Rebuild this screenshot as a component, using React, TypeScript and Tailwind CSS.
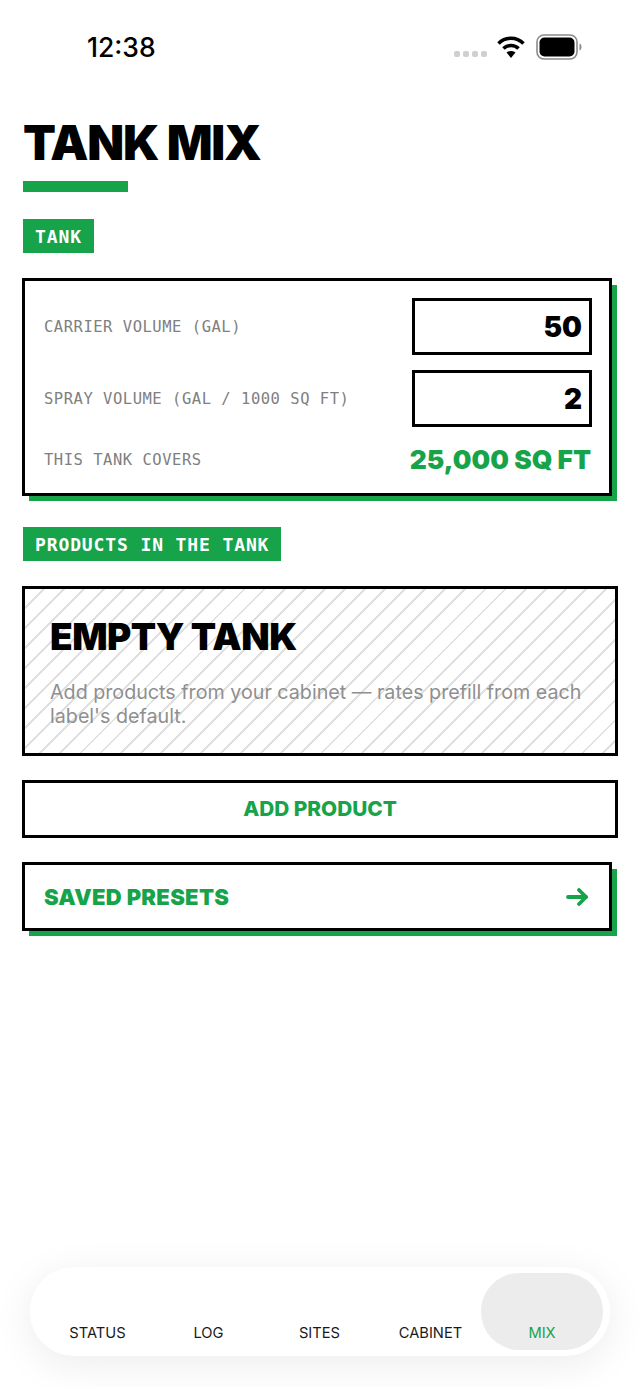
import React from "react";

const mono = "font-['DejaVu_Sans_Mono',monospace]";

function Badge({ children, className }: { children: React.ReactNode; className: string }) {
  return (
    <div className={`${className} flex h-[34px] w-fit items-center bg-[#16a34a] px-3 ${mono} text-[18px] tracking-[0.88px] font-bold text-white`}>
      {children}
    </div>
  );
}

function FieldRow({ label, value, className }: { label: string; value: string; className: string }) {
  return (
    <div className={`${className} flex items-center justify-between`}>
      <span className={`${mono} pt-[3px] text-[15.5px] tracking-[0.52px] text-[#808080]`}>{label}</span>
      <div className="flex h-[57px] w-[180px] items-center justify-end border-[3px] border-black px-[7px] text-[28px] font-black text-black">
        {value}
      </div>
    </div>
  );
}

function NavItem({ label }: { label: string }) {
  return (
    <div className="flex w-[111px] items-end justify-center pb-[6px] text-[14.7px] text-[#1a1a1a]">{label}</div>
  );
}

export default function App() {
  return (
    <div className="flex h-[1387px] w-[640px] flex-col overflow-hidden bg-white font-['Inter',sans-serif]">
      {/* status bar */}
      <div className="flex h-[94px] items-center pl-[87px] pr-[58px]">
        <span className="pt-[2px] text-[26.5px] font-medium text-black">12:38</span>
        <div className="ml-auto flex items-center">
          <div className="mt-[13px] flex gap-[3px]">
            <div className="h-[6px] w-[6px] rounded-[2px] bg-[#cfcfcf]" />
            <div className="h-[6px] w-[6px] rounded-[2px] bg-[#cfcfcf]" />
            <div className="h-[6px] w-[6px] rounded-[2px] bg-[#cfcfcf]" />
            <div className="h-[6px] w-[6px] rounded-[2px] bg-[#cfcfcf]" />
          </div>
          <svg className="ml-[10px]" width="28" height="24" viewBox="0 0 28 24" fill="none">
            <path d="M1.5 8.5C8.5 1.5 19.5 1.5 26.5 8.5" stroke="black" strokeWidth="3.6" />
            <path d="M6.5 13.5C10.5 9.5 17.5 9.5 21.5 13.5" stroke="black" strokeWidth="3.6" />
            <path d="M14 23L9.5 17.5C12 15.5 16 15.5 18.5 17.5L14 23Z" fill="black" />
          </svg>
          <svg className="ml-[11px]" width="46" height="26" viewBox="0 0 46 26" fill="none">
            <rect x="1" y="1" width="40" height="24" rx="7" stroke="#8a8a8a" strokeWidth="1.6" />
            <rect x="3.5" y="3.5" width="35" height="19" rx="5" fill="black" />
            <path d="M43.5 9.5C45 10 45.5 11.5 45.5 13C45.5 14.5 45 16 43.5 16.5Z" fill="#8a8a8a" />
          </svg>
        </div>
      </div>

      <div className="flex flex-col px-[22px]">
        <h1 className="mt-[20px] h-[58px] pl-[1px] text-[48px] leading-[58px] font-black tracking-[-1.2px] text-black">
          TANK MIX
        </h1>
        <div className="ml-[1px] mt-[9px] h-[11px] w-[105px] bg-[#16a34a]" />
        <Badge className="ml-[1px] mt-[27px]">TANK</Badge>

        <div className="mt-[25px] w-[590px] border-[3px] border-black bg-white px-[19px] pr-[17px] shadow-[6px_6px_0_-1px_#16a34a]">
          <FieldRow className="mt-[17px]" label="CARRIER VOLUME (GAL)" value="50" />
          <FieldRow className="mt-[15px]" label="SPRAY VOLUME (GAL / 1000 SQ FT)" value="2" />
          <div className="mb-[16px] mt-[16px] flex items-center justify-between">
            <span className={`${mono} pt-[1px] text-[15.5px] tracking-[0.52px] text-[#808080]`}>THIS TANK COVERS</span>
            <span className="pr-[1px] text-[26.3px] leading-[34px] font-black text-[#16a34a]">25,000 SQ FT</span>
          </div>
        </div>

        <Badge className="ml-[1px] mt-[31px]">PRODUCTS IN THE TANK</Badge>

        <div className="mt-[25px] h-[170px] w-[596px] border-[3px] border-black bg-[repeating-linear-gradient(135deg,#ffffff_0px,#ffffff_12.2px,#e0e0e0_12.2px,#e0e0e0_14.2px)] px-[25px] pt-[26px]">
          <div className="h-[44px] text-[37px] leading-[44px] font-black tracking-[-0.5px] text-black">EMPTY TANK</div>
          <p className="mt-[21px] text-[19.7px] leading-[24px] text-[#8f8f8f]">
            Add products from your cabinet — rates prefill from each label's default.
          </p>
        </div>

        <div className="mt-[24px] flex h-[58px] w-[596px] items-center justify-center border-[3px] border-black text-[20.8px] font-extrabold text-[#16a34a]">
          ADD PRODUCT
        </div>

        <div className="mt-[24px] flex h-[69px] w-[590px] items-center justify-between border-[3px] border-black pl-[19px] pr-[21px] shadow-[6px_6px_0_-1px_#16a34a]">
          <span className="pt-[1px] text-[22px] tracking-[0.3px] font-black text-[#16a34a]">SAVED PRESETS</span>
          <svg width="22" height="18" viewBox="0 0 22 18" fill="none" stroke="#16a34a" strokeWidth="3.8" strokeLinecap="round" strokeLinejoin="round">
            <path d="M2 9H20" />
            <path d="M13 2L20 9L13 16" />
          </svg>
        </div>
      </div>

      {/* tab bar */}
      <div className="mx-[30px] mb-[31px] mt-auto flex h-[89px] items-stretch rounded-[44px] bg-white py-[6px] pl-[12px] pr-[7px] shadow-[0_8px_40px_rgba(0,0,0,0.08)]">
        <NavItem label="STATUS" />
        <NavItem label="LOG" />
        <NavItem label="SITES" />
        <NavItem label="CABINET" />
        <div className="ml-[-5px] flex w-[122px] items-end justify-center rounded-[38px] bg-[#ececec] pb-[6px] text-[14.7px] text-[#16a34a]">
          MIX
        </div>
      </div>
    </div>
  );
}
